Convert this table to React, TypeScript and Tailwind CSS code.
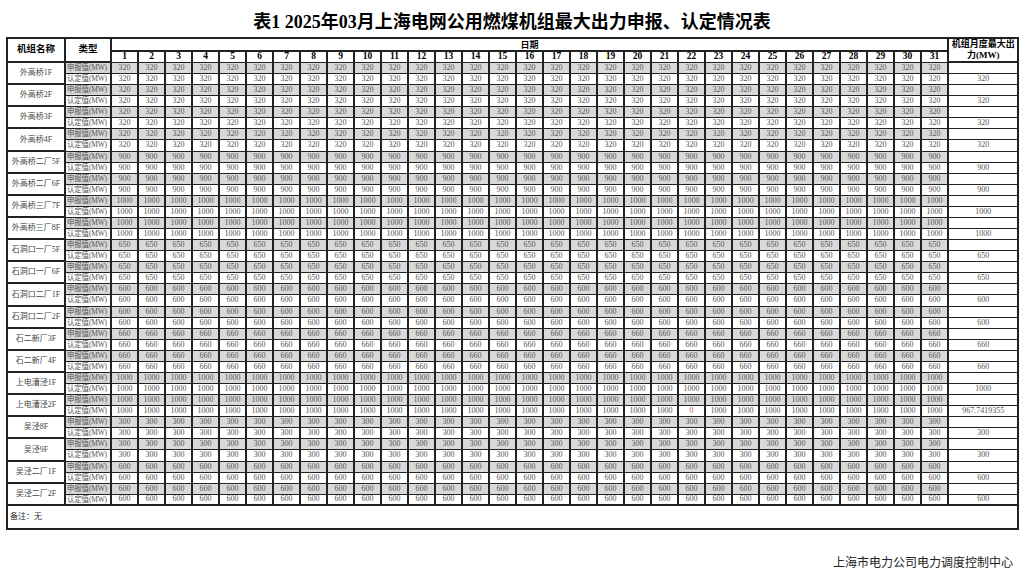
import React from "react";

type Unit = { name: string; v: number; max: string; zeroDay?: number };

const units: Unit[] = [
  { name: "外高桥1F", v: 320, max: "320" },
  { name: "外高桥2F", v: 320, max: "320" },
  { name: "外高桥3F", v: 320, max: "320" },
  { name: "外高桥4F", v: 320, max: "320" },
  { name: "外高桥二厂5F", v: 900, max: "900" },
  { name: "外高桥二厂6F", v: 900, max: "900" },
  { name: "外高桥三厂7F", v: 1000, max: "1000" },
  { name: "外高桥三厂8F", v: 1000, max: "1000" },
  { name: "石洞口一厂5F", v: 650, max: "650" },
  { name: "石洞口一厂6F", v: 650, max: "650" },
  { name: "石洞口二厂1F", v: 600, max: "600" },
  { name: "石洞口二厂2F", v: 600, max: "600" },
  { name: "石二新厂3F", v: 660, max: "660" },
  { name: "石二新厂4F", v: 660, max: "660" },
  { name: "上电漕泾1F", v: 1000, max: "1000" },
  { name: "上电漕泾2F", v: 1000, max: "967.7419355", zeroDay: 22 },
  { name: "吴泾8F", v: 300, max: "300" },
  { name: "吴泾9F", v: 300, max: "300" },
  { name: "吴泾二厂1F", v: 600, max: "600" },
  { name: "吴泾二厂2F", v: 600, max: "600" },
];

const days = Array.from({ length: 31 }, (_, i) => i + 1);

const serif = { fontFamily: '"Liberation Serif", "Noto Sans CJK SC", serif' };

export default function App() {
  return (
    <div className="w-[1024px] h-[577px] bg-white relative overflow-hidden" style={serif}>
      <div className="pt-[10px] h-[37px] text-center text-[18px] leading-[24px] font-bold text-black">
        表1 2025年03月上海电网公用燃煤机组最大出力申报、认定情况表
      </div>
      <div className="pl-[6px]">
        <table className="table-fixed border-collapse border-2 border-[#333] w-[1011px] text-[8px] leading-none">
          <colgroup>
            <col className="w-[58px]" />
            <col className="w-[46px]" />
            {days.map((d) => (
              <col key={d} className="w-[27px]" />
            ))}
            <col className="w-[70px]" />
          </colgroup>
          <thead>
            <tr className="h-[12px]">
              <th rowSpan={2} className="border-2 border-[#222] text-[9.5px] font-bold text-black">
                机组名称
              </th>
              <th rowSpan={2} className="border-2 border-[#222] text-[9.5px] font-bold text-black">
                类型
              </th>
              <th colSpan={31} className="border-2 border-[#222] text-[9px] font-bold text-black align-bottom">
                日期
              </th>
              <th rowSpan={2} className="border-2 border-[#222] text-[9px] leading-[11px] font-bold text-black px-[1px]">
                机组月度最大出力(MW)
              </th>
            </tr>
            <tr className="h-[10px]">
              {days.map((d) => (
                <th key={d} className="border-x-2 border-y border-[#222] text-[9.5px] font-bold text-black">
                  {d}
                </th>
              ))}
            </tr>
          </thead>
          <tbody>
            {units.map((u, i) => (
              <React.Fragment key={u.name}>
                <tr className="h-[11px]">
                  <td rowSpan={2} className="border-2 border-[#222] text-center text-[8px] text-[#444] whitespace-nowrap overflow-hidden">
                    {u.name}
                  </td>
                  <td className="border-x-2 border-y border-[#222] bg-[#d6d6d6] text-[7.5px] tracking-[-0.2px] text-[#555] whitespace-nowrap overflow-hidden pl-[1px]">
                    申报值(MW)
                  </td>
                  {days.map((d) => (
                    <td key={d} className="border-x-2 border-y border-[#222] bg-[#d9d9d9] text-center text-[#555]">
                      {u.v}
                    </td>
                  ))}
                  <td className="border-x-2 border-y border-[#222]"></td>
                </tr>
                <tr className={i % 7 === 3 ? "h-[12px]" : "h-[11px]"}>
                  <td className="border-x-2 border-y border-[#222] text-[7.5px] tracking-[-0.2px] text-[#555] whitespace-nowrap overflow-hidden pl-[1px]">
                    认定值(MW)
                  </td>
                  {days.map((d) => (
                    <td
                      key={d}
                      className={
                        u.zeroDay === d
                          ? "border-x-2 border-y border-[#222] text-center text-[#e05050]"
                          : "border-x-2 border-y border-[#222] text-center text-[#555]"
                      }
                    >
                      {u.zeroDay === d ? 0 : u.v}
                    </td>
                  ))}
                  <td className="border-x-2 border-y border-[#222] text-center text-[#555] whitespace-nowrap">
                    {u.max}
                  </td>
                </tr>
              </React.Fragment>
            ))}
            <tr className="h-[24px]">
              <td colSpan={34} className="border-2 border-[#222] text-left pl-[2px] text-[8px] text-[#333]">
                备注：无
              </td>
            </tr>
          </tbody>
        </table>
      </div>
      <div className="mt-[25px] pr-[11px] text-right text-[12px] leading-[16px] text-[#222]">
        上海市电力公司电力调度控制中心
      </div>
    </div>
  );
}
